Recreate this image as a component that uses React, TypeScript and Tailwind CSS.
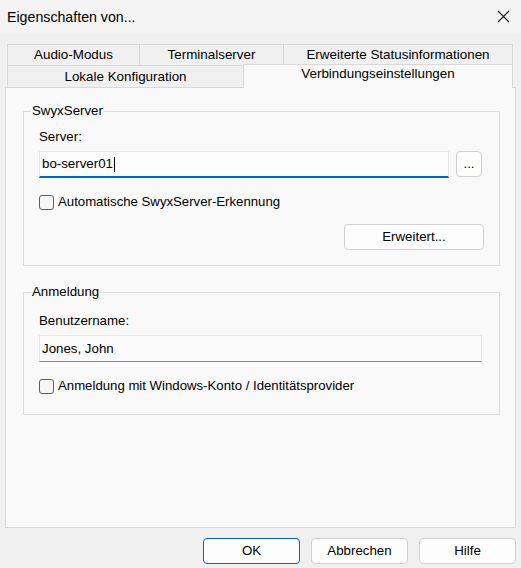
import React from 'react';

const font = { fontFamily: '"Liberation Sans", Arial, sans-serif' };

function Tab({ label, width, selected = false, last = false }: { label: string; width: string; selected?: boolean; last?: boolean }) {
  if (selected) {
    return (
      <div
        className={`${width} relative z-10 -mb-px h-[24px] border-l border-t border-r border-[#d9d9d9] bg-[#f9f9f9] flex justify-center pt-[1px] text-[13.4px] leading-[16px] text-black`}
      >
        {label}
      </div>
    );
  }
  return (
    <div
      className={`${width} h-full border-l border-t ${last ? 'border-r' : ''} border-[#d9d9d9] bg-[#f0f0f0] flex items-center justify-center text-[13.4px] leading-[16px] text-black`}
    >
      {label}
    </div>
  );
}

function Checkbox({ label }: { label: string }) {
  return (
    <label className="flex items-center gap-[4px] h-[16px]">
      <span className="w-[15px] h-[15px] rounded-[3px] border border-[#5f5f5f] bg-[#f6f6f6]" />
      <span className="text-[13.2px] leading-[16px] text-black">{label}</span>
    </label>
  );
}

function Button({ label, width, primary = false }: { label: string; width: string; primary?: boolean }) {
  return (
    <button
      className={`${width} rounded-[4px] border ${primary ? 'border-[#0067c0]' : 'border-[#d0d0d0]'} bg-[#fdfdfd] flex items-center justify-center text-[13.3px] leading-[16px] text-black`}
    >
      {label}
    </button>
  );
}

function GroupBox({ title, children }: { title: string; children: React.ReactNode }) {
  return (
    <fieldset className="w-[477px] border border-[#dcdcdc]">
      <legend className="ml-[7px] px-[1px] text-[13.3px] leading-[16px] text-black">{title}</legend>
      <div className="px-[15px]">{children}</div>
    </fieldset>
  );
}

export default function App() {
  return (
    <div className="w-[521px] h-[568px] bg-[#f0f0f0] flex flex-col overflow-hidden" style={font}>
      {/* title bar */}
      <div className="h-[33px] bg-[#f3f3f3] flex items-center justify-between pl-[7px] pr-[11px]">
        <span className="text-[14.2px] leading-[18px] text-black">Eigenschaften von...</span>
        <svg width="13" height="13" viewBox="0 0 13 13" className="mt-[-1px]">
          <path d="M1 1 L12 12 M12 1 L1 12" stroke="#1a1a1a" strokeWidth="1.1" />
        </svg>
      </div>

      <div className="px-[5px] pt-[11px] flex flex-col">
        {/* tab rows */}
        <div className="flex ml-[2px] h-[21px]">
          <Tab label="Audio-Modus" width="w-[132px]" />
          <Tab label="Terminalserver" width="w-[144px]" />
          <Tab label="Erweiterte Statusinformationen" width="w-[230px]" last />
        </div>
        <div className="flex items-end ml-[2px] h-[22px]">
          <Tab label="Lokale Konfiguration" width="w-[236px]" />
          <Tab label="Verbindungseinstellungen" width="w-[270px]" selected />
        </div>

        {/* tab page */}
        <div className="w-[511px] h-[441px] border border-[#d9d9d9] bg-[#f9f9f9] px-[17px] pt-[15px]">
          <GroupBox title="SwyxServer">
            <div className="mt-[10px] text-[13.3px] leading-[16px] text-black">Server:</div>
            <div className="mt-[6px] flex items-start gap-[7px]">
              <div className="w-[410px] h-[27px] bg-[#fcfcfc] border border-[#e6e6e6] border-b-2 border-b-[#0067c0] flex items-center pl-[2px] text-[13.3px] leading-[16px] text-black">
                bo-server01
                <span className="ml-[1px] w-px h-[15px] bg-black" />
              </div>
              <Button label="..." width="w-[26px] h-[26px]" />
            </div>
            <div className="mt-[16px]">
              <Checkbox label="Automatische SwyxServer-Erkennung" />
            </div>
            <div className="mt-[14px] mb-[15px] flex justify-end">
              <Button label="Erweitert..." width="w-[140px] h-[26px]" />
            </div>
          </GroupBox>

          <div className="mt-[18px]">
            <GroupBox title="Anmeldung">
              <div className="mt-[13px] text-[13.3px] leading-[16px] text-black">Benutzername:</div>
              <div className="mt-[6px] w-[443px] h-[27px] bg-[#fbfbfb] border border-[#e6e6e6] border-b-[#8a8a8a] flex items-center pl-[2px] text-[13.3px] leading-[16px] text-black">
                Jones, John
              </div>
              <div className="mt-[16px] mb-[20px]">
                <Checkbox label="Anmeldung mit Windows-Konto / Identitätsprovider" />
              </div>
            </GroupBox>
          </div>
        </div>

        {/* dialog buttons */}
        <div className="mt-[10px] flex justify-end gap-[11px]">
          <Button label="OK" width="w-[97px] h-[26px]" primary />
          <Button label="Abbrechen" width="w-[97px] h-[26px]" />
          <Button label="Hilfe" width="w-[97px] h-[26px]" />
        </div>
      </div>
    </div>
  );
}
